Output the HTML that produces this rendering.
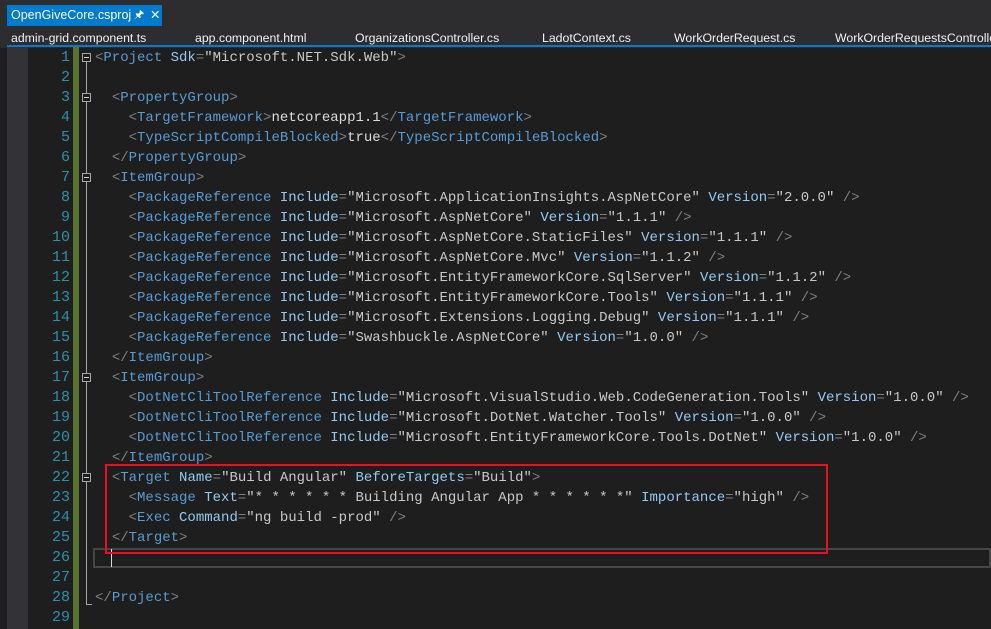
<!DOCTYPE html>
<html><head><meta charset="utf-8"><style>
body{margin:0;width:991px;height:629px;background:#1e1e1e;overflow:hidden;position:relative;font-family:"Liberation Sans",sans-serif}
#top{position:absolute;left:0;top:0;width:991px;height:48px;background:#2d2d30}
#tab{position:absolute;left:7px;top:5px;width:155px;height:21px;background:#007acc;color:#fff;font-size:12.5px;line-height:21px}
.t2{position:absolute;top:29px;color:#f1f1f1;font-size:12.3px;line-height:18px;white-space:nowrap}
#line{position:absolute;left:7px;top:45px;width:984px;height:2px;background:#007acc}
#strip{position:absolute;left:7px;top:47px;width:21px;height:582px;background:#333337}
#green{position:absolute;left:73px;top:47px;width:6px;height:582px;background:#577430}
.ln{position:absolute;left:28px;width:42px;text-align:right;color:#2b91af;font:15px/20px "Liberation Mono",monospace}
.cd{position:absolute;left:95px;white-space:pre;font:14px/20px "Liberation Mono",monospace;color:#dcdcdc}
.b{color:#808080}.k{color:#569cd6}.a{color:#92caf4}.v{color:#c8c8c8}
.fold{position:absolute;left:82px;width:9px;height:9px;border:1px solid #a5a5a5;box-sizing:border-box}
.fold:after{content:"";position:absolute;left:1px;top:3px;width:5px;height:1px;background:#d0d0d0}
.vl{position:absolute;left:86px;width:1px;background:#a5a5a5}
</style></head><body>
<div id="top"></div>
<div id="tab"><span style="margin-left:4px">OpenGiveCore.csproj</span><span style="position:absolute;left:127px;font-size:11px">&#x1F588;</span><span style="position:absolute;left:143px;top:0">✕</span></div>
<div class="t2" style="left:11px">admin-grid.component.ts</div>
<div class="t2" style="left:195px">app.component.html</div>
<div class="t2" style="left:355px">OrganizationsController.cs</div>
<div class="t2" style="left:542px">LadotContext.cs</div>
<div class="t2" style="left:674px">WorkOrderRequest.cs</div>
<div class="t2" style="left:835px">WorkOrderRequestsController.cs</div>
<div id="line"></div>
<div id="strip"></div>
<div id="green"></div>
<div style="position:absolute;left:93px;top:548px;width:898px;height:20px;border:2px solid #464646;box-sizing:border-box"></div>
<div style="position:absolute;left:111px;top:549px;width:1px;height:18px;background:#dcdcdc"></div>
<div class="vl" style="top:62px;height:543px"></div>
<div style="position:absolute;left:86px;top:604px;width:6px;height:1px;background:#a5a5a5"></div>
<div class="fold" style="top:53px;background:#1e1e1e"></div>
<div class="fold" style="top:93px;background:#1e1e1e"></div>
<div class="fold" style="top:173px;background:#1e1e1e"></div>
<div class="fold" style="top:373px;background:#1e1e1e"></div>
<div class="fold" style="top:473px;background:#1e1e1e"></div>
<div class="cd" style="top:48px"><span class="b">&lt;</span><span class="k">Project</span> <span class="a">Sdk</span><span class="b">=</span><span class="v">"Microsoft.NET.Sdk.Web"</span><span class="b">&gt;</span>

  <span class="b">&lt;</span><span class="k">PropertyGroup</span><span class="b">&gt;</span>
    <span class="b">&lt;</span><span class="k">TargetFramework</span><span class="b">&gt;</span>netcoreapp1.1<span class="b">&lt;/</span><span class="k">TargetFramework</span><span class="b">&gt;</span>
    <span class="b">&lt;</span><span class="k">TypeScriptCompileBlocked</span><span class="b">&gt;</span>true<span class="b">&lt;/</span><span class="k">TypeScriptCompileBlocked</span><span class="b">&gt;</span>
  <span class="b">&lt;/</span><span class="k">PropertyGroup</span><span class="b">&gt;</span>
  <span class="b">&lt;</span><span class="k">ItemGroup</span><span class="b">&gt;</span>
    <span class="b">&lt;</span><span class="k">PackageReference</span> <span class="a">Include</span><span class="b">=</span><span class="v">"Microsoft.ApplicationInsights.AspNetCore"</span> <span class="a">Version</span><span class="b">=</span><span class="v">"2.0.0"</span> <span class="b">/&gt;</span>
    <span class="b">&lt;</span><span class="k">PackageReference</span> <span class="a">Include</span><span class="b">=</span><span class="v">"Microsoft.AspNetCore"</span> <span class="a">Version</span><span class="b">=</span><span class="v">"1.1.1"</span> <span class="b">/&gt;</span>
    <span class="b">&lt;</span><span class="k">PackageReference</span> <span class="a">Include</span><span class="b">=</span><span class="v">"Microsoft.AspNetCore.StaticFiles"</span> <span class="a">Version</span><span class="b">=</span><span class="v">"1.1.1"</span> <span class="b">/&gt;</span>
    <span class="b">&lt;</span><span class="k">PackageReference</span> <span class="a">Include</span><span class="b">=</span><span class="v">"Microsoft.AspNetCore.Mvc"</span> <span class="a">Version</span><span class="b">=</span><span class="v">"1.1.2"</span> <span class="b">/&gt;</span>
    <span class="b">&lt;</span><span class="k">PackageReference</span> <span class="a">Include</span><span class="b">=</span><span class="v">"Microsoft.EntityFrameworkCore.SqlServer"</span> <span class="a">Version</span><span class="b">=</span><span class="v">"1.1.2"</span> <span class="b">/&gt;</span>
    <span class="b">&lt;</span><span class="k">PackageReference</span> <span class="a">Include</span><span class="b">=</span><span class="v">"Microsoft.EntityFrameworkCore.Tools"</span> <span class="a">Version</span><span class="b">=</span><span class="v">"1.1.1"</span> <span class="b">/&gt;</span>
    <span class="b">&lt;</span><span class="k">PackageReference</span> <span class="a">Include</span><span class="b">=</span><span class="v">"Microsoft.Extensions.Logging.Debug"</span> <span class="a">Version</span><span class="b">=</span><span class="v">"1.1.1"</span> <span class="b">/&gt;</span>
    <span class="b">&lt;</span><span class="k">PackageReference</span> <span class="a">Include</span><span class="b">=</span><span class="v">"Swashbuckle.AspNetCore"</span> <span class="a">Version</span><span class="b">=</span><span class="v">"1.0.0"</span> <span class="b">/&gt;</span>
  <span class="b">&lt;/</span><span class="k">ItemGroup</span><span class="b">&gt;</span>
  <span class="b">&lt;</span><span class="k">ItemGroup</span><span class="b">&gt;</span>
    <span class="b">&lt;</span><span class="k">DotNetCliToolReference</span> <span class="a">Include</span><span class="b">=</span><span class="v">"Microsoft.VisualStudio.Web.CodeGeneration.Tools"</span> <span class="a">Version</span><span class="b">=</span><span class="v">"1.0.0"</span> <span class="b">/&gt;</span>
    <span class="b">&lt;</span><span class="k">DotNetCliToolReference</span> <span class="a">Include</span><span class="b">=</span><span class="v">"Microsoft.DotNet.Watcher.Tools"</span> <span class="a">Version</span><span class="b">=</span><span class="v">"1.0.0"</span> <span class="b">/&gt;</span>
    <span class="b">&lt;</span><span class="k">DotNetCliToolReference</span> <span class="a">Include</span><span class="b">=</span><span class="v">"Microsoft.EntityFrameworkCore.Tools.DotNet"</span> <span class="a">Version</span><span class="b">=</span><span class="v">"1.0.0"</span> <span class="b">/&gt;</span>
  <span class="b">&lt;/</span><span class="k">ItemGroup</span><span class="b">&gt;</span>
  <span class="b">&lt;</span><span class="k">Target</span> <span class="a">Name</span><span class="b">=</span><span class="v">"Build Angular"</span> <span class="a">BeforeTargets</span><span class="b">=</span><span class="v">"Build"</span><span class="b">&gt;</span>
    <span class="b">&lt;</span><span class="k">Message</span> <span class="a">Text</span><span class="b">=</span><span class="v">"* * * * * * Building Angular App * * * * * *"</span> <span class="a">Importance</span><span class="b">=</span><span class="v">"high"</span> <span class="b">/&gt;</span>
    <span class="b">&lt;</span><span class="k">Exec</span> <span class="a">Command</span><span class="b">=</span><span class="v">"ng build -prod"</span> <span class="b">/&gt;</span>
  <span class="b">&lt;/</span><span class="k">Target</span><span class="b">&gt;</span>


<span class="b">&lt;/</span><span class="k">Project</span><span class="b">&gt;</span>
</div>
<div class="ln" style="top:48px">1<br>2<br>3<br>4<br>5<br>6<br>7<br>8<br>9<br>10<br>11<br>12<br>13<br>14<br>15<br>16<br>17<br>18<br>19<br>20<br>21<br>22<br>23<br>24<br>25<br>26<br>27<br>28<br>29</div>
<div style="position:absolute;left:105px;top:464px;width:723px;height:90px;border:2px solid #e81123;box-sizing:border-box"></div>
</body></html>
